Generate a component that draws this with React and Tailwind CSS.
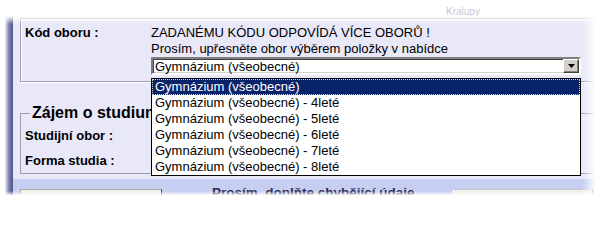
const options = [
  "Gymnázium (všeobecné)",
  "Gymnázium (všeobecné) - 4leté",
  "Gymnázium (všeobecné) - 5leté",
  "Gymnázium (všeobecné) - 6leté",
  "Gymnázium (všeobecné) - 7leté",
  "Gymnázium (všeobecné) - 8leté",
];

const App = () => {
  return (
    <div className="relative w-[596px] h-[200px] overflow-hidden bg-white text-black font-['Liberation_Sans',Arial,sans-serif]">
      {/* faded header scrap */}
      <div className="h-[16px] pl-[446px] pt-[7px] text-[10px] leading-[10px] text-[#c8c8d8]">Kralupy</div>

      {/* PANEL */}
      <div className="flex w-[640px] ml-[5px]">
        <div className="w-[8px] shrink-0 bg-gradient-to-r from-[#eef0f8] via-[#7a80ac] to-[#4c5486]" />
        <div className="flex-1 bg-[#e8e8f8]">
          <div className="pl-[7px] pt-[2px] pb-[5px]">
            {/* KOD OBORU */}
            <div className="flex border border-[#9c9cac] shadow-[inset_1px_1px_0_#fff,1px_1px_0_#fff] pt-[6px] pb-[6px] pl-[4px]">
              <div className="w-[126px] shrink-0 text-[13px] leading-[16px] font-bold">Kód oboru :</div>
              <div className="relative text-[13px] leading-[16px]">
                <div>ZADANÉMU KÓDU ODPOVÍDÁ VÍCE OBORŮ !</div>
                <div>Prosím, upřesněte obor výběrem položky v nabídce</div>
                <div className="flex w-[430px] h-[18px] bg-white border-2 border-t-[#808080] border-l-[#808080] border-r-white border-b-white shadow-[inset_1px_1px_0_#404040,inset_-1px_-1px_0_#d4d0c8]">
                  <div className="flex-1 pl-[2px] pt-[1px] leading-[13px]">Gymnázium (všeobecné)</div>
                  <div className="w-[16px] h-[14px] flex items-center justify-center bg-[#d4d0c8] border border-t-white border-l-white border-r-[#404040] border-b-[#404040] shadow-[inset_-1px_-1px_0_#808080]">
                    <svg width="7" height="4" viewBox="0 0 7 4">
                      <polygon points="0,0 7,0 3.5,4" fill="#000" />
                    </svg>
                  </div>
                </div>

                {/* OPEN LIST */}
                <div className="absolute left-0 top-[53px] z-10 w-[430px] border border-black bg-white">
                  {options.map((o, i) => (
                    <div
                      key={o}
                      className={`h-[16px] pl-[3px] leading-[16px] ${i === 0 ? "bg-[#0a246a] text-white outline-1 outline-dotted outline-[#e8dc8c] -outline-offset-1" : ""}`}
                    >
                      {o}
                    </div>
                  ))}
                </div>
              </div>
            </div>

            {/* ZAJEM O STUDIUM */}
            <fieldset className="mt-[22px] border border-[#9c9cac] pl-[4px] pt-[6px] pb-[4px]">
              <legend className="ml-[5px] px-[2px] text-[16px] leading-[18px] font-bold">Zájem o studium</legend>
              <div className="h-[16px] mb-[9px] text-[13px] leading-[16px] font-bold">Studijní obor :</div>
              <div className="h-[16px] text-[13px] leading-[16px] font-bold">Forma studia :</div>
            </fieldset>
          </div>

          {/* BUTTON BAR */}
          <div className="flex items-start h-[40px] bg-[#c6cef2] pt-[6px]">
            <div className="shrink-0 ml-[7px] mt-[4px] w-[142px] h-[24px] bg-[#f0efea] border border-t-[#a8a8a8] border-l-[#a8a8a8] border-r-[#404040] border-b-[#404040] pt-[6px] text-center text-[11px] leading-[12px] text-[#b0b0b0]">
              Zpět na výběr
            </div>
            <div className="shrink-0 w-[291px] pl-[50px] whitespace-nowrap text-[13.5px] leading-[16px] font-bold text-[#2c2c52]">
              Prosím, doplňte chybějící údaje
            </div>
            <div className="shrink-0 mt-[4px] w-[140px] h-[24px] bg-[#efeee8] border border-t-[#c8c8c8] border-l-white border-r-[#404040] border-b-[#404040] pt-[6px] text-center text-[11px] leading-[12px] text-[#b0b0b0]">
              Pokračovat
            </div>
          </div>
        </div>
      </div>

      {/* torn edge fades */}
      <div className="absolute left-0 right-0 top-[16px] h-[8px] bg-gradient-to-b from-white to-transparent" />
      <div className="absolute top-0 bottom-0 right-0 w-[14px] bg-gradient-to-l from-white to-transparent" />
      <div className="absolute left-0 right-0 bottom-0 h-[9px] bg-gradient-to-t from-white via-white to-transparent" />
    </div>
  );
};

export default App;
